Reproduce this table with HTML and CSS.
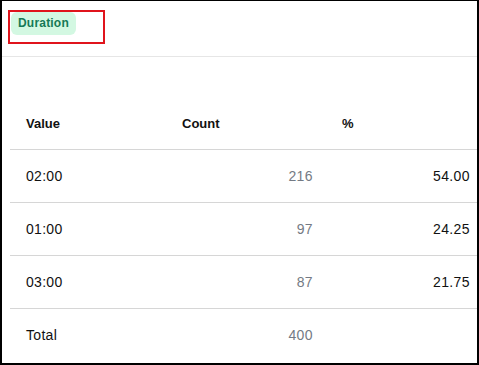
FILE: index.html
```html
<!DOCTYPE html>
<html>
<head>
<meta charset="utf-8">
<link rel="stylesheet" href="styles.css">
</head>
<body>
<div class="frame">
  <div class="topbar">
    <span class="badge">Duration</span>
    <div class="highlight"></div>
  </div>
  <div class="content">
    <table class="stats">
      <colgroup>
        <col class="c-value"><col class="c-count"><col class="c-pct">
      </colgroup>
      <thead>
        <tr><th>Value</th><th>Count</th><th>%</th></tr>
      </thead>
      <tbody>
        <tr><td>02:00</td><td class="num muted">216</td><td class="num">54.00</td></tr>
        <tr><td>01:00</td><td class="num muted">97</td><td class="num">24.25</td></tr>
        <tr><td>03:00</td><td class="num muted">87</td><td class="num">21.75</td></tr>
        <tr class="total"><td>Total</td><td class="num muted">400</td><td class="num"></td></tr>
      </tbody>
    </table>
  </div>
</div>
</body>
</html>
```
FILE: styles.css
```css
html, body { margin: 0; padding: 0; background: #fff; }
.frame {
  position: relative;
  width: 479px;
  height: 365px;
  box-sizing: border-box;
  border-style: solid;
  border-color: #000;
  border-width: 1px 2px 2px 2px;
  overflow: hidden;
  font-family: "Liberation Sans", Arial, sans-serif;
  color: #111;
}
.topbar {
  position: relative;
  height: 55px;
  border-bottom: 1px solid #e6e6e6;
  box-sizing: content-box;
}
.badge {
  position: absolute;
  left: 9px;
  top: 11px;
  height: 23px;
  line-height: 23px;
  padding: 0 7px;
  border-radius: 6px;
  background: #d3f8e2;
  color: #167a56;
  font-weight: bold;
  font-size: 12px;
  letter-spacing: 0.2px;
}
.highlight {
  position: absolute;
  left: 6px;
  top: 9px;
  width: 97px;
  height: 34px;
  box-sizing: border-box;
  border: 2px solid #e0141c;
}
.content { padding: 40px 0 0 8px; }
.stats {
  border-collapse: collapse;
  table-layout: fixed;
  width: 475px;
  font-size: 14px;
}
.c-value { width: 156px; }
.c-count { width: 160px; }
.c-pct { width: 159px; }
.stats th, .stats td {
  height: 52px;
  padding: 0 16px;
  text-align: left;
  border-bottom: 1px solid #d6d6d6;
  vertical-align: middle;
}
.stats th { font-weight: bold; font-size: 13px; color: #111; }
.stats td { letter-spacing: 0.3px; }
.stats td.num { text-align: right; letter-spacing: 0.4px; padding-right: 13px; }
.stats td.num:last-child { padding-right: 15px; }
.stats .muted { color: #747a84; }
.stats tr.total td { border-bottom: none; }
```
